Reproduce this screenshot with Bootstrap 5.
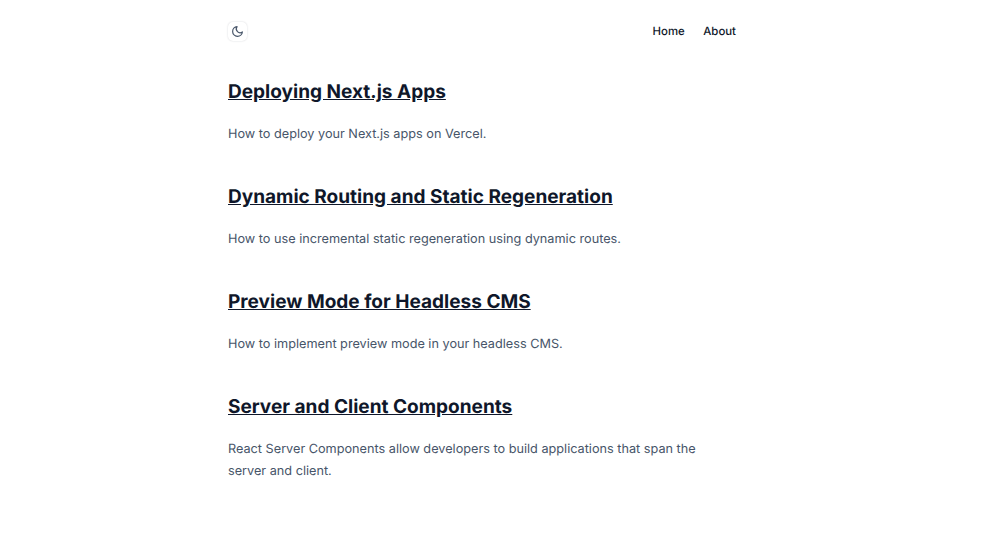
<!DOCTYPE html>
<html lang="en"><head><meta charset="utf-8">
<link href="https://cdn.jsdelivr.net/npm/bootstrap@5.3.0/dist/css/bootstrap.min.css" rel="stylesheet">
<style>
body{font-family:Inter,sans-serif;background:#fff;color:#475569;text-rendering:geometricPrecision;}
.page-wrap{width:508px;margin-left:228px;}
.top-bar{height:62px;margin-bottom:15px;}
.theme-btn{width:19px;height:19px;border-radius:5px;box-shadow:0 0 2px rgba(15,23,42,.18);background:#fff;border:0;padding:0;}
.top-nav{gap:18.5px;}
.top-link{font-size:11.4px;font-weight:500;color:#0f172a;text-decoration:none;line-height:18px;}
.post-item{margin-bottom:36px;}
.post-title{font-size:19.05px;font-weight:700;line-height:29px;margin:0 0 18px;color:#0f172a;}
.post-title a{color:#0f172a;text-decoration:underline;}
.post-desc{font-size:12.7px;line-height:22px;margin:0;color:#475569;}
</style></head><body>
<div class="page-wrap">
<header class="top-bar d-flex justify-content-between align-items-center">
<button class="theme-btn d-flex align-items-center justify-content-center" aria-label="Toggle theme"><svg width="13" height="13" viewBox="0 0 24 24" fill="none" stroke="#475569" stroke-width="2.2" stroke-linecap="round" stroke-linejoin="round"><path d="M21 12.79A9 9 0 1 1 11.21 3 7 7 0 0 0 21 12.79z"/></svg></button>
<nav class="top-nav d-flex"><a class="top-link" href="#">Home</a><a class="top-link" href="#">About</a></nav>
</header>
<main>
<article class="post-item"><h2 class="post-title"><a href="#">Deploying Next.js Apps</a></h2><p class="post-desc">How to deploy your Next.js apps on Vercel.</p></article>
<article class="post-item"><h2 class="post-title"><a href="#">Dynamic Routing and Static Regeneration</a></h2><p class="post-desc">How to use incremental static regeneration using dynamic routes.</p></article>
<article class="post-item"><h2 class="post-title"><a href="#">Preview Mode for Headless CMS</a></h2><p class="post-desc">How to implement preview mode in your headless CMS.</p></article>
<article class="post-item"><h2 class="post-title"><a href="#">Server and Client Components</a></h2><p class="post-desc">React Server Components allow developers to build applications that span the server and client.</p></article>
</main>
</div>
<script src="https://cdn.jsdelivr.net/npm/bootstrap@5.3.0/dist/js/bootstrap.bundle.min.js"></script>
</body></html>
